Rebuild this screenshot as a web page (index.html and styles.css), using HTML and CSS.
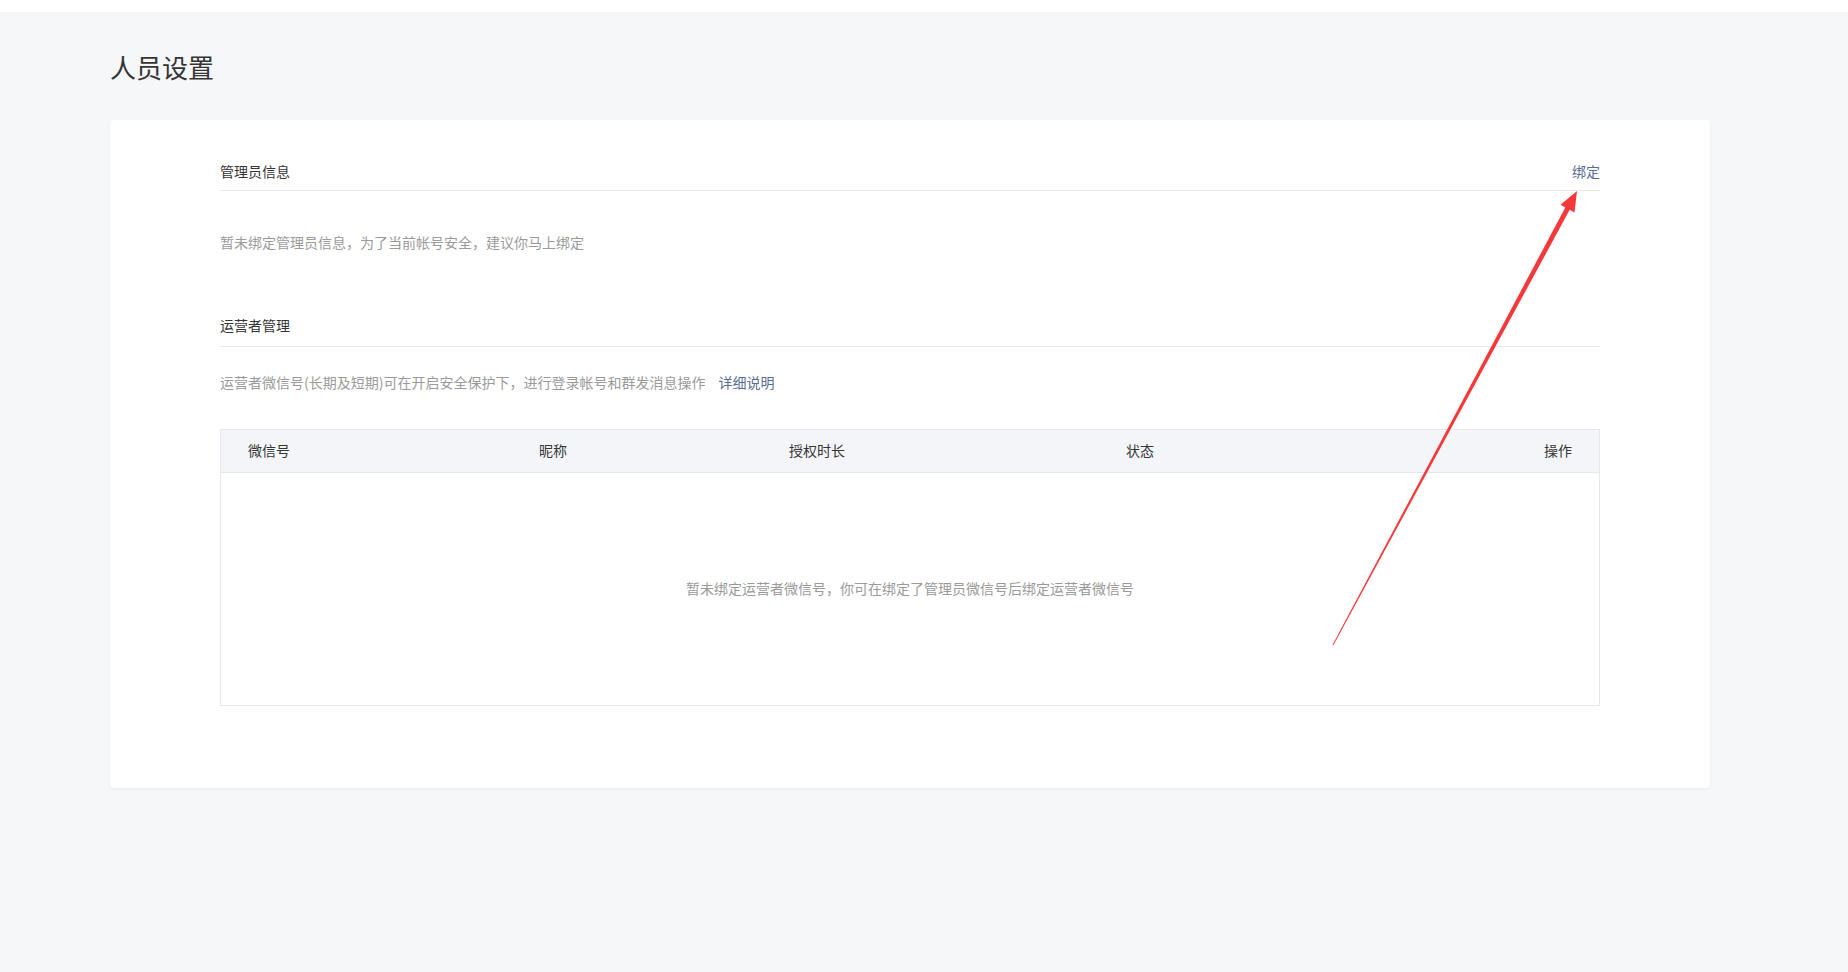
FILE: index.html
```html
<!DOCTYPE html>
<html>
<head>
    <meta charset="utf-8">
    <title>人员设置</title>
    <link rel="stylesheet" href="styles.css">
</head>
<body>
    <div class="topbar"></div>
    <div class="page">
        <h2 class="page-title">人员设置</h2>

        <div class="card">
            <div class="section-head">
                <span>管理员信息</span>
                <a class="link" href="#">绑定</a>
            </div>
            <p class="tips tips-admin">暂未绑定管理员信息，为了当前帐号安全，建议你马上绑定</p>

            <div class="section-head section-op">
                <span>运营者管理</span>
            </div>
            <p class="tips tips-op">运营者微信号(长期及短期)可在开启安全保护下，进行登录帐号和群发消息操作<a class="link more" href="#">详细说明</a></p>

            <div class="op-table">
                <div class="op-row op-head">
                    <div class="cell">微信号</div>
                    <div class="cell">昵称</div>
                    <div class="cell">授权时长</div>
                    <div class="cell">状态</div>
                    <div class="cell cell-right">操作</div>
                </div>
                <div class="op-empty">暂未绑定运营者微信号，你可在绑定了管理员微信号后绑定运营者微信号</div>
            </div>
        </div>
    </div>

    <!-- annotation arrow -->
    <svg class="mark" width="1848" height="972" viewBox="0 0 1848 972">
        <polygon fill="#f5393a" points="1332.6,644.8 1565.3,207.4 1560.5,204.8 1577,191 1574.5,212.4 1569.7,209.8 1333.4,645.2"/>
    </svg>
</body>
</html>
```

FILE: styles.css
```css
body { margin: 0; background: #f6f7f9; font-family: "Noto Sans CJK SC", "Noto Sans", sans-serif; font-size: 14px; color: #353535; position: relative; min-height: 972px; }
.topbar { height: 12px; background: #fff; }
.page { padding: 37px 110px 0; }
.page-title { margin: 0 0 35px; font-size: 26px; line-height: 36px; font-weight: normal; color: #353535; }

.card { width: 1600px; box-sizing: border-box; padding: 42px 110px 82px; background: #fff; border-radius: 4px; box-shadow: 0 1px 3px rgba(0, 0, 0, 0.05); }
.section-head { display: flex; justify-content: space-between; line-height: 18px; padding-bottom: 10px; border-bottom: 1px solid #e7e7eb; }
.section-op { margin-top: 64px; padding-bottom: 12px; }
.link { color: #576b95; text-decoration: none; }
.tips { margin: 0; line-height: 20px; color: #9a9a9a; }
.tips-admin { margin-top: 41px; }
.tips-op { margin-top: 25px; }
.more { margin-left: 13px; }

.op-table { margin-top: 37px; border: 1px solid #e7e7eb; }
.op-row { display: grid; grid-template-columns: 291px 250px 337px 1fr 120px; }
.op-head { height: 43px; box-sizing: border-box; line-height: 40px; padding-bottom: 2px; background: #f4f5f9; border-bottom: 1px solid #e7e7eb; }
.cell { padding-left: 27px; }
.cell-right { text-align: right; padding: 0 27px 0 0; }
.op-empty { height: 232px; display: flex; align-items: center; justify-content: center; color: #9a9a9a; padding-bottom: 3px; box-sizing: border-box; }

.mark { position: absolute; top: 0; left: 0; pointer-events: none; }
```
